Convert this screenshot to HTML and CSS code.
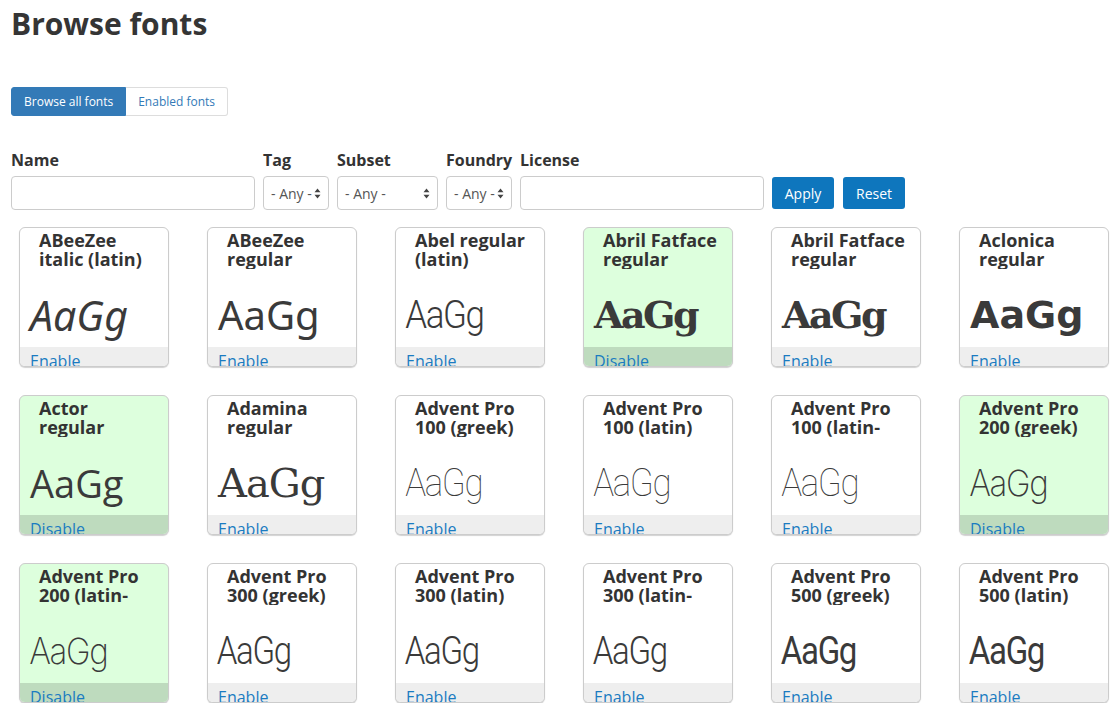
FILE: index.html
```html
<!DOCTYPE html>
<html lang="en">
<head>
<meta charset="utf-8">
<title>Browse fonts</title>
<link rel="stylesheet" href="styles.css">
</head>
<body>
<h1 class="page-title">Browse fonts</h1>

<nav class="tabs">
  <a class="tab tab-active" href="#">Browse all fonts</a>
  <a class="tab" href="#">Enabled fonts</a>
</nav>

<form class="filters">
  <div class="field field-name">
    <label class="field-label">Name</label>
    <input class="text-input" type="text">
  </div>
  <div class="field field-tag">
    <label class="field-label">Tag</label>
    <div class="select"><span class="select-text">- Any -</span><svg class="select-arrow" width="7" height="11" viewBox="0 0 7 11"><path d="M3.5 0.5 L6.5 4.2 L0.5 4.2 Z M3.5 10.5 L6.5 6.8 L0.5 6.8 Z" fill="#444"/></svg></div>
  </div>
  <div class="field field-subset">
    <label class="field-label">Subset</label>
    <div class="select"><span class="select-text">- Any -</span><svg class="select-arrow" width="7" height="11" viewBox="0 0 7 11"><path d="M3.5 0.5 L6.5 4.2 L0.5 4.2 Z M3.5 10.5 L6.5 6.8 L0.5 6.8 Z" fill="#444"/></svg></div>
  </div>
  <div class="field field-foundry">
    <label class="field-label">Foundry</label>
    <div class="select"><span class="select-text">- Any -</span><svg class="select-arrow" width="7" height="11" viewBox="0 0 7 11"><path d="M3.5 0.5 L6.5 4.2 L0.5 4.2 Z M3.5 10.5 L6.5 6.8 L0.5 6.8 Z" fill="#444"/></svg></div>
  </div>
  <div class="field field-license">
    <label class="field-label">License</label>
    <input class="text-input" type="text">
  </div>
  <div class="buttons">
    <button class="btn" type="button">Apply</button>
    <button class="btn" type="button">Reset</button>
  </div>
</form>

<div class="font-grid">
  <div class="card"><div class="card-title">ABeeZee italic (latin)</div><div class="card-sample s-abeezee-italic">AaGg</div><div class="card-foot"><a href="#">Enable</a></div></div>
  <div class="card"><div class="card-title">ABeeZee regular</div><div class="card-sample s-abeezee">AaGg</div><div class="card-foot"><a href="#">Enable</a></div></div>
  <div class="card"><div class="card-title">Abel regular (latin)</div><div class="card-sample s-abel">AaGg</div><div class="card-foot"><a href="#">Enable</a></div></div>
  <div class="card card-on"><div class="card-title">Abril Fatface regular</div><div class="card-sample s-abril">AaGg</div><div class="card-foot"><a href="#">Disable</a></div></div>
  <div class="card"><div class="card-title">Abril Fatface regular</div><div class="card-sample s-abril">AaGg</div><div class="card-foot"><a href="#">Enable</a></div></div>
  <div class="card"><div class="card-title">Aclonica regular</div><div class="card-sample s-aclonica">AaGg</div><div class="card-foot"><a href="#">Enable</a></div></div>

  <div class="card card-on"><div class="card-title">Actor regular</div><div class="card-sample s-actor">AaGg</div><div class="card-foot"><a href="#">Disable</a></div></div>
  <div class="card"><div class="card-title">Adamina regular</div><div class="card-sample s-adamina">AaGg</div><div class="card-foot"><a href="#">Enable</a></div></div>
  <div class="card"><div class="card-title">Advent Pro 100 (greek)</div><div class="card-sample s-advent100">AaGg</div><div class="card-foot"><a href="#">Enable</a></div></div>
  <div class="card"><div class="card-title">Advent Pro 100 (latin)</div><div class="card-sample s-advent100">AaGg</div><div class="card-foot"><a href="#">Enable</a></div></div>
  <div class="card"><div class="card-title">Advent Pro 100 (latin-ext)</div><div class="card-sample s-advent100">AaGg</div><div class="card-foot"><a href="#">Enable</a></div></div>
  <div class="card card-on"><div class="card-title">Advent Pro 200 (greek)</div><div class="card-sample s-advent200">AaGg</div><div class="card-foot"><a href="#">Disable</a></div></div>

  <div class="card card-on"><div class="card-title">Advent Pro 200 (latin-ext)</div><div class="card-sample s-advent200">AaGg</div><div class="card-foot"><a href="#">Disable</a></div></div>
  <div class="card"><div class="card-title">Advent Pro 300 (greek)</div><div class="card-sample s-advent300">AaGg</div><div class="card-foot"><a href="#">Enable</a></div></div>
  <div class="card"><div class="card-title">Advent Pro 300 (latin)</div><div class="card-sample s-advent300">AaGg</div><div class="card-foot"><a href="#">Enable</a></div></div>
  <div class="card"><div class="card-title">Advent Pro 300 (latin-ext)</div><div class="card-sample s-advent300">AaGg</div><div class="card-foot"><a href="#">Enable</a></div></div>
  <div class="card"><div class="card-title">Advent Pro 500 (greek)</div><div class="card-sample s-advent500">AaGg</div><div class="card-foot"><a href="#">Enable</a></div></div>
  <div class="card"><div class="card-title">Advent Pro 500 (latin)</div><div class="card-sample s-advent500">AaGg</div><div class="card-foot"><a href="#">Enable</a></div></div>
</div>
</body>
</html>
```

FILE: styles.css
```css
* { box-sizing: border-box; }

html, body { overflow: hidden; }

body {
  margin: 0;
  padding: 0 11px;
  font-family: "Open Sans", "Noto Sans", sans-serif;
  color: #333;
  background: #fff;
}

.page-title {
  margin: 6px 0 0;
  font-size: 30px;
  line-height: 36px;
  font-weight: 700;
  color: #353535;
}

/* tabs */
.tabs {
  display: flex;
  margin-top: 45px;
  height: 29px;
}
.tab {
  display: flex;
  align-items: center;
  padding: 0 12px;
  font-size: 12px;
  color: #337ab7;
  text-decoration: none;
  border: 1px solid #ddd;
  border-left: 0;
  border-radius: 0 3px 3px 0;
}
.tab-active {
  background: #337ab7;
  border: 1px solid #337ab7;
  color: #fff;
  border-radius: 3px 0 0 3px;
}

/* filters */
.filters {
  display: flex;
  align-items: flex-end;
  gap: 8px;
  margin-top: 33px;
}
.field {
  display: flex;
  flex-direction: column;
}
.field-label {
  font-size: 16px;
  line-height: 22px;
  font-weight: 700;
  color: #333;
  margin-bottom: 5px;
  white-space: nowrap;
}
.field-name { width: 244px; }
.field-tag { width: 66px; }
.field-subset { width: 101px; }
.field-foundry { width: 66px; }
.field-license { width: 244px; }

.text-input {
  height: 34px;
  width: 100%;
  border: 1px solid #ccc;
  border-radius: 4px;
  font: inherit;
  margin: 0;
}
.select {
  position: relative;
  height: 34px;
  border: 1px solid #ccc;
  border-radius: 4px;
  display: flex;
  align-items: center;
  padding-left: 7px;
  font-size: 14px;
  color: #555;
  white-space: nowrap;
}
.select-arrow {
  position: absolute;
  right: 7px;
  top: 11px;
}
.buttons {
  display: flex;
  gap: 9px;
  margin-bottom: 1px;
}
.btn {
  height: 32px;
  width: 62px;
  padding: 0;
  border: none;
  border-radius: 3px;
  background: #0e76bd;
  color: #fff;
  font-family: "Open Sans", sans-serif;
  font-size: 14px;
}

/* cards */
.font-grid {
  display: grid;
  grid-template-columns: repeat(6, 150px);
  column-gap: 38px;
  row-gap: 28px;
  margin-top: 17px;
  padding-left: 8px;
}
.card {
  height: 140px;
  display: grid;
  grid-template-rows: 41px 78px 1fr;
  border: 1px solid #ccc;
  border-radius: 6px;
  box-shadow: 0 1px 1px rgba(0,0,0,0.18);
  overflow: hidden;
  background: #fff;
}
.card-on { background: #ddffdd; }
.card-title {
  padding: 3px 14px 0 19px;
  font-size: 18px;
  line-height: 19px;
  font-weight: 700;
  color: #333;
  overflow: hidden;
  height: 41px;
}
.card-sample {
  padding: 19px 0 0 10px;
  font-size: 40px;
  line-height: 54px;
  color: #3a3a3a;
  white-space: nowrap;
  overflow: hidden;
}
.card-foot {
  background: #eee;
  padding: 3px 0 0 10px;
  font-size: 16px;
  line-height: 22px;
  overflow: hidden;
}
.card-on .card-foot { background: #bedbbe; }
.card-foot a {
  color: #1a7bc1;
  text-decoration: none;
}

/* sample faces */
.s-abeezee-italic { font-family: "Noto Sans", sans-serif; font-style: italic; font-size: 41px; }
.s-abeezee { font-family: "Noto Sans", sans-serif; font-size: 40px; }
.s-abel { font-family: "Roboto", sans-serif; font-weight: 300; font-size: 38px; letter-spacing: -1.5px; transform: scaleX(0.92); transform-origin: left; }
.s-abril { font-family: "DejaVu Serif", serif; font-weight: 700; font-size: 38px; letter-spacing: -2.5px; }
.s-aclonica { font-family: "DejaVu Sans", sans-serif; font-weight: 700; font-size: 38px; }
.s-actor { font-family: "Open Sans", sans-serif; font-size: 38px; }
.s-adamina { font-family: "DejaVu Serif", serif; font-size: 40px; letter-spacing: -1px; }
.s-advent100 { font-family: "Roboto", sans-serif; font-weight: 100; font-size: 38px; letter-spacing: -1.5px; transform: scaleX(0.92); transform-origin: left; }
.s-advent200 { font-family: "Inter", sans-serif; font-weight: 200; font-size: 36px; letter-spacing: -1.5px; transform: scaleX(0.92); transform-origin: left; }
.s-advent300 { font-family: "Roboto", sans-serif; font-weight: 300; font-size: 38px; letter-spacing: -1.5px; transform: scaleX(0.87); transform-origin: left; }
.s-advent500 { font-family: "Roboto", sans-serif; font-weight: 400; font-size: 38px; letter-spacing: -1.5px; transform: scaleX(0.87); transform-origin: left; }
```
